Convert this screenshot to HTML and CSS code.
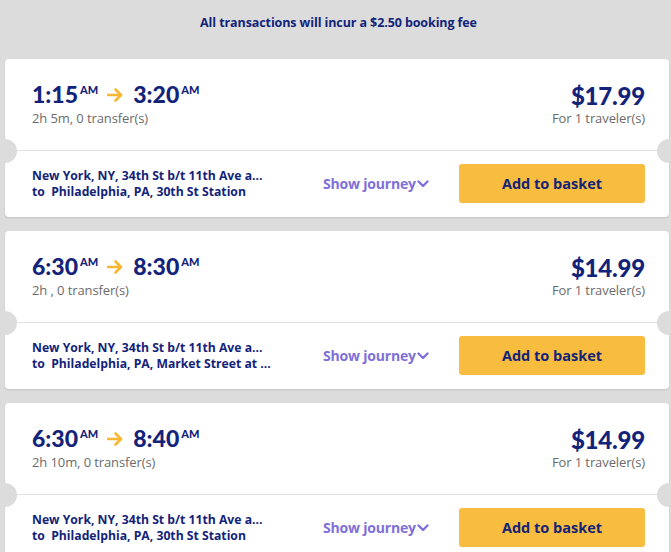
FILE: index.html
```html
<!DOCTYPE html>
<html>
<head>
<meta charset="utf-8">
<link rel="stylesheet" href="styles.css">
</head>
<body>
<div class="notice">All transactions will incur a $2.50 booking fee</div>
<div class="list">
  <div class="card">
    <div class="top">
      <div>
        <div class="times"><span class="t">1:15</span><sup>AM</sup><svg class="arrow" viewBox="0 0 16 14"><path d="M1 7H14M8.5 1.5L14 7L8.5 12.5" fill="none" stroke="#f7b733" stroke-width="2.6" stroke-linecap="round" stroke-linejoin="round"/></svg><span class="t">3:20</span><sup>AM</sup></div>
        <div class="sub">2h 5m, 0 transfer(s)</div>
      </div>
      <div class="right">
        <div class="price">$17.99</div>
        <div class="sub">For 1 traveler(s)</div>
      </div>
    </div>
    <div class="bottom">
      <div class="route">
        <div>New York, NY, 34th St b/t 11th Ave a...</div>
        <div>to&nbsp; Philadelphia, PA, 30th St Station</div>
      </div>
      <div class="show">Show journey<svg class="chev" viewBox="0 0 12 8"><path d="M1.5 1.5L6 6L10.5 1.5" fill="none" stroke="#7e70d8" stroke-width="2.4" stroke-linecap="round" stroke-linejoin="round"/></svg></div>
      <div class="btn">Add to basket</div>
    </div>
  </div>
  <div class="card">
    <div class="top">
      <div>
        <div class="times"><span class="t">6:30</span><sup>AM</sup><svg class="arrow" viewBox="0 0 16 14"><path d="M1 7H14M8.5 1.5L14 7L8.5 12.5" fill="none" stroke="#f7b733" stroke-width="2.6" stroke-linecap="round" stroke-linejoin="round"/></svg><span class="t">8:30</span><sup>AM</sup></div>
        <div class="sub">2h , 0 transfer(s)</div>
      </div>
      <div class="right">
        <div class="price">$14.99</div>
        <div class="sub">For 1 traveler(s)</div>
      </div>
    </div>
    <div class="bottom">
      <div class="route">
        <div>New York, NY, 34th St b/t 11th Ave a...</div>
        <div>to&nbsp; Philadelphia, PA, Market Street at ...</div>
      </div>
      <div class="show">Show journey<svg class="chev" viewBox="0 0 12 8"><path d="M1.5 1.5L6 6L10.5 1.5" fill="none" stroke="#7e70d8" stroke-width="2.4" stroke-linecap="round" stroke-linejoin="round"/></svg></div>
      <div class="btn">Add to basket</div>
    </div>
  </div>
  <div class="card">
    <div class="top">
      <div>
        <div class="times"><span class="t">6:30</span><sup>AM</sup><svg class="arrow" viewBox="0 0 16 14"><path d="M1 7H14M8.5 1.5L14 7L8.5 12.5" fill="none" stroke="#f7b733" stroke-width="2.6" stroke-linecap="round" stroke-linejoin="round"/></svg><span class="t">8:40</span><sup>AM</sup></div>
        <div class="sub">2h 10m, 0 transfer(s)</div>
      </div>
      <div class="right">
        <div class="price">$14.99</div>
        <div class="sub">For 1 traveler(s)</div>
      </div>
    </div>
    <div class="bottom">
      <div class="route">
        <div>New York, NY, 34th St b/t 11th Ave a...</div>
        <div>to&nbsp; Philadelphia, PA, 30th St Station</div>
      </div>
      <div class="show">Show journey<svg class="chev" viewBox="0 0 12 8"><path d="M1.5 1.5L6 6L10.5 1.5" fill="none" stroke="#7e70d8" stroke-width="2.4" stroke-linecap="round" stroke-linejoin="round"/></svg></div>
      <div class="btn">Add to basket</div>
    </div>
  </div>
</div>
</body>
</html>
```
FILE: styles.css
```css
* { box-sizing: border-box; }
html, body { margin: 0; padding: 0; }
body {
  background: #dcdcdc;
  font-family: "Open Sans", "Noto Sans", sans-serif;
  color: #13237a;
  width: 671px;
  height: 552px;
  overflow: hidden;
}
.notice {
  height: 59px;
  padding: 15px 0 0 6px;
  text-align: center;
  font-size: 12.5px;
  font-weight: 700;
  line-height: 16px;
  letter-spacing: -0.1px;
}
.list {
  display: flex;
  flex-direction: column;
  gap: 14px;
  padding: 0 2px 0 5px;
}
.card {
  position: relative;
  background: #fff;
  border-radius: 4px;
  box-shadow: 0 1px 2px rgba(0,0,0,0.12);
  height: 158px;
  flex-shrink: 0;
}
.card::before, .card::after {
  content: "";
  position: absolute;
  top: 80px;
  width: 24px;
  height: 24px;
  border-radius: 50%;
  background: #dcdcdc;
}
.card::before { left: -12px; }
.card::after { right: -12px; }
.top {
  height: 92px;
  display: flex;
  justify-content: space-between;
  padding: 22px 24px 0 27px;
  border-bottom: 1px solid #e2e2e2;
}
.times {
  display: flex;
  align-items: flex-start;
  height: 29px;
  font-family: "Lato", sans-serif;
}
.t {
  font-size: 23px;
  font-weight: 900;
  line-height: 26px;
  letter-spacing: 0;
}
sup {
  font-size: 11px;
  font-weight: 900;
  line-height: 12px;
  margin: 3px 0 0 2px;
  vertical-align: top;
}
.arrow {
  width: 16px;
  height: 14px;
  margin: 7px 10px 0 9px;
}
.sub {
  font-size: 13px;
  color: #6b6b6b;
  line-height: 16px;
  letter-spacing: -0.1px;
}
.right { text-align: right; }
.price {
  font-family: "Lato", sans-serif;
  font-size: 24px;
  font-weight: 900;
  line-height: 29px;
  letter-spacing: -0.2px;
}
.bottom {
  height: 65px;
  display: grid;
  grid-template-columns: 1fr 136px 186px;
  align-items: center;
  padding: 0 24px 0 27px;
}
.route {
  font-size: 12.2px;
  font-weight: 700;
  line-height: 16px;
  white-space: nowrap;
}
.show {
  color: #7e70d8;
  font-size: 14px;
  font-weight: 700;
  display: flex;
  align-items: center;
  letter-spacing: -0.2px;
}
.chev {
  width: 12px;
  height: 8px;
  margin-left: 1px;
}
.btn {
  height: 39px;
  background: #f8bc3e;
  border-radius: 3px;
  display: flex;
  align-items: center;
  justify-content: center;
  font-size: 14.5px;
  font-weight: 700;
}
```
